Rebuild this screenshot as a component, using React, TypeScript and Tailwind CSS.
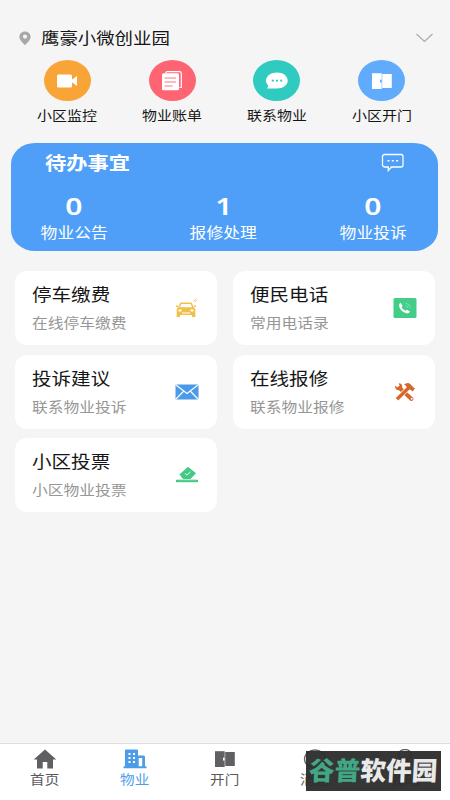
import React from 'react';

const FONT = "font-['Noto_Sans','Noto_Sans_CJK_SC',sans-serif]";

function PinIcon() {
  return (
    <svg width="12" height="15" viewBox="0 0 12 15">
      <path fillRule="evenodd" fill="#a8a8a8" d="M6 .5C2.8.5.4 2.8.4 5.7.4 9 3.6 11.3 6 14.3 8.4 11.3 11.6 9 11.6 5.7 11.6 2.8 9.2.5 6 .5Zm0 3a2.1 2.1 0 1 1 0 4.2 2.1 2.1 0 0 1 0-4.2Z" />
    </svg>
  );
}

function CameraIcon() {
  return (
    <svg width="22" height="14" viewBox="0 0 22 14" fill="#fff">
      <rect x="1" y="0.5" width="15" height="13" rx="1.5" />
      <path d="M15.5 6 21 2v10l-5.5-4Z" />
    </svg>
  );
}

function BillIcon() {
  return (
    <svg width="22" height="20" viewBox="0 0 22 20">
      <path d="M5 2.5V1.8Q5 .6 6.2.6H18.5Q20.3.6 20.3 2.4V16.5H18.5" fill="none" stroke="#fff" strokeWidth="1.2" />
      <rect x="1" y="2.2" width="17" height="17" rx="1.5" fill="#fff" />
      <path d="M3.5 7H15M3.5 11H15M3.5 15H11.5" stroke="#ff6472" strokeWidth="0.9" />
    </svg>
  );
}

function ChatIcon() {
  return (
    <svg width="24" height="18" viewBox="0 0 24 18">
      <path d="M12 .5C18 .5 22.7 4 22.7 8.6S18 16.6 12 16.6H2l1.4-2.8C1.8 12.4 1 10.6 1 8.6 1 4 6 .5 12 .5Z" fill="#fff" />
      <g fill="#2fcbc1">
        <circle cx="7.8" cy="8.7" r="1.1" />
        <circle cx="12" cy="8.7" r="1.1" />
        <circle cx="16.2" cy="8.7" r="1.1" />
      </g>
    </svg>
  );
}

function DoorIcon({ color, knob }: { color: string; knob: string }) {
  return (
    <svg width="22" height="18" viewBox="0 0 22 18">
      <path d="M1 1.2H10.7V17H1Z" fill={color} />
      <path d="M11.2 2H20.8V16H11.2Z" fill={color} />
      <rect x="9" y="7.5" width="1.6" height="3.2" rx="0.8" fill={knob} />
    </svg>
  );
}

function MessageIcon() {
  return (
    <svg width="24" height="19" viewBox="0 0 24 19">
      <path d="M3.5 1.5H20A2 2 0 0 1 22 3.5V12A2 2 0 0 1 20 14H10.500L7.300 17.500V14H3.500A2 2 0 0 1 1.500 12V3.500A2 2 0 0 1 3.500 1.500Z" fill="none" stroke="#fff" strokeWidth="1.3" />
      <path d="M6.5 7.7H8.5M10.8 7.7H12.8M15.1 7.7H17.1" stroke="#fff" strokeWidth="1.6" />
    </svg>
  );
}

function CarIcon() {
  return (
    <svg width="24" height="22" viewBox="0 0 24 22">
      <path fillRule="evenodd" fill="#f1c04a" d="M5.5 5.5H16.5L18.8 10.3Q20.3 11 20.3 12.5V20H17V18H5V20H1.7V12.5Q1.7 11 3.2 10.3ZM6.4 7 4.9 10.3H17.1L15.6 7ZM3.5 12.5V14.5H6.5V12.5ZM15.5 12.5V14.5H18.5V12.5Z" />
      <path d="M7 16H15" stroke="#fff" strokeWidth="1" />
      <path d="M1 9.2H3M19 9.2H21" stroke="#f1c04a" strokeWidth="1.4" />
      <path d="M18 4.5 21.5 1.5M19.5 5 22 3" stroke="#f4cf7c" strokeWidth="1" />
    </svg>
  );
}

function PhoneIcon() {
  return (
    <svg width="24" height="20" viewBox="0 0 24 20">
      <rect x="0.5" y="0" width="23" height="20" rx="1.5" fill="#43cd88" />
      <path d="M7.7 4.7 9.6 7.9 8.5 9.3Q9.8 11.8 12.6 12.8L14 11.7 17 13.6Q16.2 15.6 14.2 15.6 10.5 15 8 12 5.4 8.8 6.2 6.2 6.7 5 7.7 4.7Z" fill="#fff" />
      <path d="M12.5 5.2Q16.8 5.6 17.3 10M12.5 7.7Q14.6 8 14.9 10" fill="none" stroke="#8fe3b8" strokeWidth="0.8" />
    </svg>
  );
}

function MailIcon() {
  return (
    <svg width="24" height="16" viewBox="0 0 24 16">
      <rect x="0.5" y="0.5" width="23" height="15" rx="1" fill="#4a9ae8" />
      <path d="M1 1 12 9.5 23 1M1 15 8.8 7M23 15 15.2 7" fill="none" stroke="#fff" strokeWidth="1.2" />
    </svg>
  );
}

function ToolsIcon() {
  return (
    <svg width="24" height="20" viewBox="0 0 24 20">
      <path d="M6.5 6 18.5 17" stroke="#d5672b" strokeWidth="4" strokeLinecap="round" />
      <path d="M1.8 3.5 4.5 5.5 6.7 4 5.7 1.2Q9.3 1.5 9.3 5 8.5 8.4 5 8.3 2.2 7.5 1.8 3.5Z" fill="#d5672b" />
      <circle cx="18.7" cy="16.8" r="1" fill="#fff" />
      <path d="M15.5 6 3.5 17.5" stroke="#fff" strokeWidth="4.6" />
      <path d="M15.5 6 4 17.2" stroke="#d5672b" strokeWidth="3.4" />
      <path d="M11 2.7Q14.5-.2 17.5 2.2L20.5 5.4 22 6.3 19.7 9.5 17.6 7.7 16.6 7.8 13.6 5Q13.2 3.3 11 2.7Z" fill="#d5672b" />
    </svg>
  );
}

function VoteIcon() {
  return (
    <svg width="24" height="18" viewBox="0 0 24 18">
      <path d="M13 .8 21 7.2 15.5 13H8L4.5 8.5Z" fill="#43c885" />
      <path d="M10 7.5 12 9 15.5 5.8" fill="none" stroke="#fff" strokeWidth="0.9" />
      <path d="M1 13.8H23V16.2H1Z" fill="#43c885" />
      <path d="M3 14H21" stroke="#8fdab4" strokeWidth="0.7" />
    </svg>
  );
}

function HomeIcon() {
  return (
    <svg width="24" height="20" viewBox="0 0 24 20">
      <path d="M12 .5 23.3 10.6H20V19.5H14.3V13H9.7V19.5H4V10.6H.7Z" fill="#606062" />
    </svg>
  );
}

function BuildingIcon() {
  return (
    <svg width="24" height="20" viewBox="0 0 24 20">
      <path fillRule="evenodd" fill="#4c9de8" d="M2 1.5Q2 .5 3 .5H14Q15 .5 15 1.5V6.5H20.5Q22 6.5 22 8V17.3H23.5V19.3H.5V17.3H2ZM15.7 9V17.3H19.2V9Z" />
      <path d="M5.5 5H7.5M10 5H12M5.5 9H7.5M10 9H12M5.5 13H7.5M10 13H12" stroke="#fff" strokeWidth="2" />
    </svg>
  );
}

function MessageTabIcon() {
  return (
    <svg width="24" height="20" viewBox="0 0 24 20">
      <ellipse cx="12" cy="10" rx="10.5" ry="9" fill="none" stroke="#606062" strokeWidth="1.3" />
    </svg>
  );
}

function UserIcon() {
  return (
    <svg width="24" height="20" viewBox="0 0 24 20">
      <ellipse cx="12" cy="5.5" rx="6.5" ry="5" fill="none" stroke="#606062" strokeWidth="1.3" />
      <path d="M2 19.5Q3 12 12 12T22 19.5" fill="none" stroke="#606062" strokeWidth="1.3" />
    </svg>
  );
}

const shortcuts = [
  { label: '小区监控', color: 'bg-[#f9a436]', icon: <CameraIcon /> },
  { label: '物业账单', color: 'bg-[#ff6472]', icon: <BillIcon /> },
  { label: '联系物业', color: 'bg-[#2fcbc1]', icon: <ChatIcon /> },
  { label: '小区开门', color: 'bg-[#60abfb]', icon: <DoorIcon color="#fff" knob="#60abfb" /> },
];

const todos = [
  { count: 0, label: '物业公告' },
  { count: 1, label: '报修处理' },
  { count: 0, label: '物业投诉' },
];

const services = [
  { title: '停车缴费', text: '在线停车缴费', icon: <CarIcon /> },
  { title: '便民电话', text: '常用电话录', icon: <PhoneIcon /> },
  { title: '投诉建议', text: '联系物业投诉', icon: <MailIcon /> },
  { title: '在线报修', text: '联系物业报修', icon: <ToolsIcon /> },
  { title: '小区投票', text: '小区物业投票', icon: <VoteIcon /> },
];

const tabs = [
  { label: '首页', color: 'text-[#59595b]', icon: <HomeIcon /> },
  { label: '物业', color: 'text-[#4c9de8]', icon: <BuildingIcon /> },
  { label: '开门', color: 'text-[#59595b]', icon: <DoorIcon color="#606062" knob="#fff" /> },
  { label: '消息', color: 'text-[#59595b]', icon: <MessageTabIcon /> },
  { label: '我的', color: 'text-[#59595b]', icon: <UserIcon /> },
];

export default function App() {
  return (
    <div className={`relative flex h-[800px] w-[450px] flex-col overflow-hidden bg-[#f5f5f5] text-[#161616] ${FONT}`}>
      <header className="mt-[26px] flex h-6 shrink-0 items-center pr-4 pl-[19px]">
        <PinIcon />
        <h1 className="ml-2.5 origin-left scale-x-[1.15] text-[16px] leading-6 whitespace-nowrap">鹰豪小微创业园</h1>
        <svg className="ml-auto" width="19" height="10" viewBox="0 0 19 10">
          <path d="M1.5 1 9.5 8.5 17.5 1" fill="none" stroke="#aaa" strokeWidth="1.2" />
        </svg>
      </header>

      <nav className="mt-2.5 ml-[15px] grid w-[419px] shrink-0 grid-cols-4">
        {shortcuts.map((item) => (
          <div key={item.label} className="flex flex-col items-center">
            <div className={`flex h-[41px] w-[47px] items-center justify-center rounded-[50%] ${item.color}`}>{item.icon}</div>
            <span className="mt-1 scale-x-[1.15] text-[13px] leading-5">{item.label}</span>
          </div>
        ))}
      </nav>

      <section className="mt-[18px] ml-[11px] flex h-[108px] w-[427px] shrink-0 flex-col rounded-[24px/21px] bg-[#4f9ff8] text-white">
        <div className="flex items-center justify-between pt-[7px] pr-[33px] pl-[34px]">
          <h2 className="origin-left scale-x-[1.15] text-[18.5px] leading-[25px] font-bold">待办事宜</h2>
          <MessageIcon />
        </div>
        <div className="mt-[17px] -ml-3 grid w-[449px] grid-cols-3">
          {todos.map((item) => (
            <div key={item.label} className="flex flex-col items-center">
              <span className="scale-x-[1.25] text-[24px] leading-[28px] font-semibold">{item.count}</span>
              <span className="mt-0.5 scale-x-[1.15] text-[14.6px] leading-5">{item.label}</span>
            </div>
          ))}
        </div>
      </section>

      <main className="mt-5 ml-[15px] grid w-[420px] grid-cols-2 gap-x-4 gap-y-[9.5px]">
        {services.map((item) => (
          <div key={item.title} className="flex h-[74px] items-center justify-between rounded-xl bg-white pr-[18px] pl-[17px]">
            <div className="flex flex-col items-start pt-0.5">
              <h3 className="origin-left scale-x-[1.15] text-[17px] leading-7">{item.title}</h3>
              <p className="origin-left scale-x-[1.15] text-[13.7px] leading-7 text-[#969696]">{item.text}</p>
            </div>
            {item.icon}
          </div>
        ))}
      </main>

      <footer className="mt-auto grid h-[57px] shrink-0 grid-cols-5 border-t border-[#dedede] bg-white pt-[5px]">
        {tabs.map((tab) => (
          <div key={tab.label} className={`flex flex-col items-center ${tab.color}`}>
            <div className="flex h-5 items-center">{tab.icon}</div>
            <span className="scale-x-[1.15] text-[12.7px] leading-5">{tab.label}</span>
          </div>
        ))}
      </footer>

      <div className="absolute top-[751px] left-[306px] flex h-10 w-[135px] items-center justify-center bg-[#2b2b2b]/95">
        <span className="-skew-x-3 text-[25.7px] leading-none font-black whitespace-nowrap text-[#e9e9e9]">
          <span className="text-[#41a784]">谷普</span>软件园
        </span>
      </div>
    </div>
  );
}
